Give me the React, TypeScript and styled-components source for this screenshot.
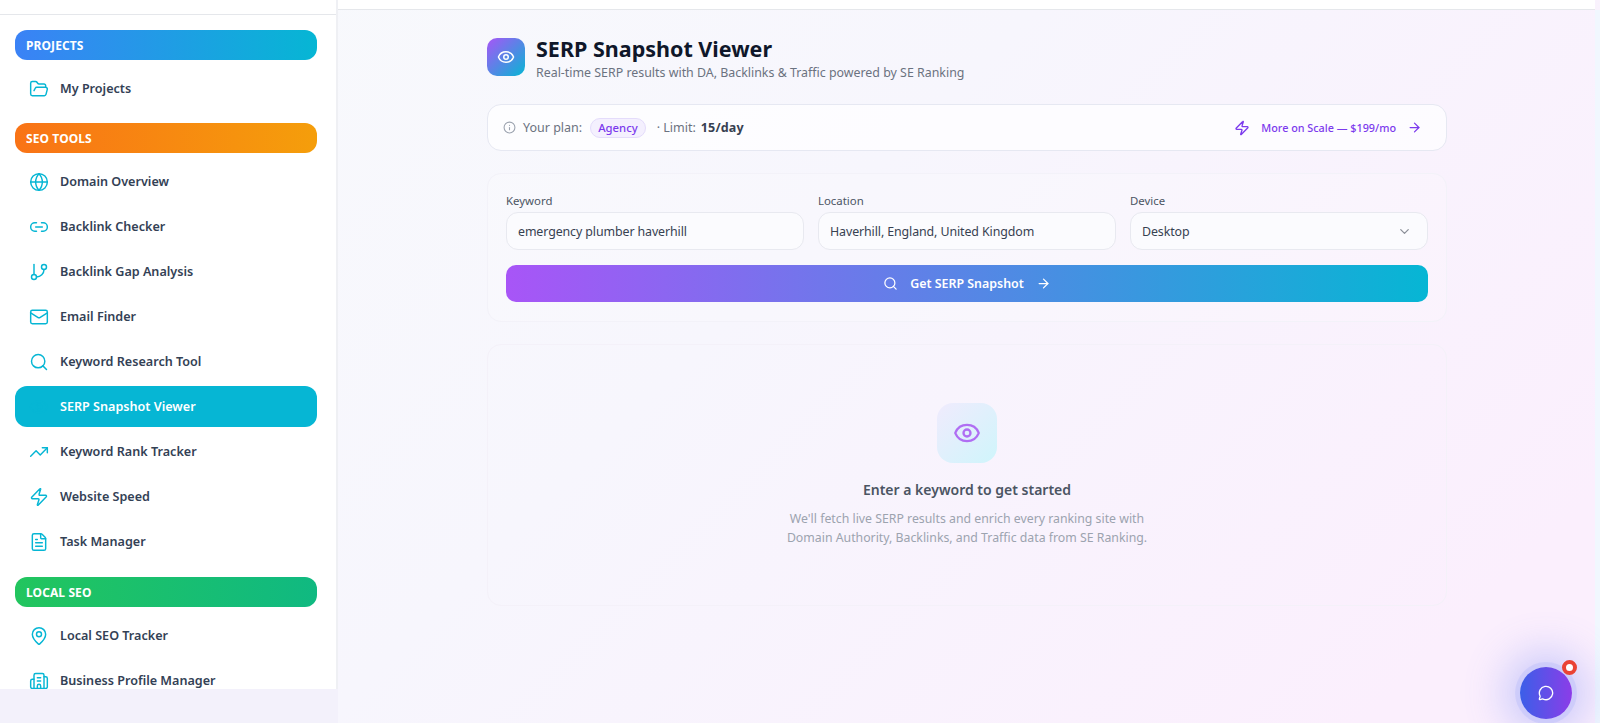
import React from "react";
import styled, { createGlobalStyle } from "styled-components";
import {
  ArrowRight,
  Building2,
  ChevronDown,
  Eye,
  FileText,
  FolderOpen,
  GitBranch,
  Globe,
  Info,
  Link2,
  Mail,
  MapPin,
  MessageCircle,
  Search,
  TrendingUp,
  Zap,
} from "lucide-react";

const GlobalStyle = createGlobalStyle`
  html, body, #root {
    margin: 0;
    height: 100%;
  }
  body {
    overflow: hidden;
    font-family: "Noto Sans", "Open Sans", sans-serif;
    background: linear-gradient(135deg, #f8fafc 0%, #f7f6fd 45%, #fbeffd 90%);
  }
  * {
    box-sizing: border-box;
  }
`;

const Page = styled.div`
  display: flex;
  height: 723px;
  overflow: hidden;
`;

const SidebarColumn = styled.div`
  width: 338px;
  flex-shrink: 0;
  display: flex;
  flex-direction: column;
  background: #f3f1fb;
`;

const Sidebar = styled.nav`
  height: 689px;
  overflow: hidden;
  background: #ffffff;
  border-right: 2px solid #eff0f4;
`;

const SidebarTop = styled.div`
  height: 15px;
  border-bottom: 1px solid #e5e7eb;
`;

const SidebarBody = styled.div`
  padding: 15px 19px 0 15px;
  display: flex;
  flex-direction: column;
`;

const GroupHeader = styled.div<{ $from: string; $to: string; $gap: number }>`
  height: 30px;
  margin-top: ${({ $gap }) => $gap}px;
  margin-bottom: 8px;
  padding-left: 11px;
  display: flex;
  align-items: center;
  border-radius: 12px;
  background: linear-gradient(90deg, ${({ $from }) => $from}, ${({ $to }) => $to});
  color: #ffffff;
  font-size: 12px;
  font-weight: 700;
  letter-spacing: 0.1px;
`;

const NavList = styled.div`
  display: flex;
  flex-direction: column;
  gap: 4px;
`;

const NavItem = styled.a<{ $active?: boolean }>`
  height: 41px;
  flex-shrink: 0;
  padding-left: 14px;
  display: flex;
  align-items: center;
  gap: 11px;
  border-radius: 12px;
  background: ${({ $active }) => ($active ? "#06b6d4" : "transparent")};
  color: ${({ $active }) => ($active ? "#ffffff" : "#334155")};
  font-size: 12.6px;
  font-weight: 600;

  svg {
    width: 20px;
    height: 20px;
    flex-shrink: 0;
    color: #06b6d4;
    stroke-width: 1.75;
  }
`;

const Main = styled.main`
  flex: 1;
  min-width: 0;
  display: flex;
  flex-direction: column;
`;

const TopBar = styled.div`
  height: 10px;
  flex-shrink: 0;
  background: #ffffff;
  border-bottom: 1px solid #e5e7eb;
`;

const ScrollTrack = styled.div`
  width: 5px;
  flex-shrink: 0;
  margin-top: 10px;
  background: #f1f7fe;
`;

const Content = styled.div`
  width: 960px;
  margin-left: 149px;
  padding-top: 26px;
  display: flex;
  flex-direction: column;
`;

const TitleRow = styled.header`
  display: flex;
  align-items: flex-start;
  gap: 11px;
  height: 45px;
`;

const TitleIcon = styled.div`
  width: 38px;
  height: 38px;
  margin-top: 2px;
  border-radius: 10px;
  display: flex;
  align-items: center;
  justify-content: center;
  color: #ffffff;
  background: linear-gradient(135deg, #a855f7, #06b6d4);

  svg {
    width: 18px;
    height: 18px;
  }
`;

const TitleText = styled.div`
  display: flex;
  flex-direction: column;
  gap: 2px;
`;

const Title = styled.h1`
  margin: 0;
  font-size: 21.5px;
  line-height: 26px;
  font-weight: 700;
  color: #0f172a;
`;

const Subtitle = styled.p`
  margin: 0;
  font-size: 12.4px;
  line-height: 17px;
  color: #6b7280;
`;

const PlanBar = styled.div`
  margin-top: 23px;
  height: 47px;
  padding: 0 24px 0 15px;
  display: flex;
  align-items: center;
  justify-content: space-between;
  background: rgba(255, 255, 255, 0.7);
  border: 1px solid #e6e8f2;
  border-radius: 14px;
`;

const PlanInfo = styled.div`
  display: flex;
  align-items: center;
  gap: 6px;
  font-size: 12.5px;
  color: #6b7280;

  svg {
    width: 13px;
    height: 13px;
    color: #9ca3af;
    margin-right: 1px;
  }

  b {
    margin-left: -1px;
    letter-spacing: 0.15px;
    color: #374151;
    font-weight: 700;
  }
`;

const PlanBadge = styled.span`
  height: 20px;
  padding: 0 7px;
  margin: 0 5px 0 2px;
  display: inline-flex;
  align-items: center;
  border-radius: 10px;
  background: #f4f0fe;
  border: 1px solid #e4dcfb;
  color: #7c3aed;
  font-size: 11.3px;
  font-weight: 500;
`;

const UpgradeLink = styled.a`
  display: flex;
  align-items: center;
  gap: 11px;
  color: #7c3aed;
  font-size: 10.8px;
  font-weight: 500;

  svg {
    width: 15px;
    height: 15px;
  }
  svg:first-child {
    width: 16px;
    height: 16px;
  }
`;

const SearchCard = styled.section`
  margin-top: 22px;
  padding: 19px 18px 19px 18px;
  background: rgba(255, 255, 255, 0.2);
  border: 1px solid #f3f2f9;
  border-radius: 14px;
`;

const FieldGrid = styled.div`
  display: grid;
  grid-template-columns: repeat(3, 1fr);
  gap: 14px;
`;

const Field = styled.label`
  display: flex;
  flex-direction: column;
  gap: 3px;
  font-size: 11.4px;
  line-height: 16px;
  color: #4b5563;
`;

const InputBox = styled.div`
  height: 38px;
  padding: 1px 15px 0 11px;
  display: flex;
  align-items: center;
  justify-content: space-between;
  border: 1px solid #e8e9f0;
  border-radius: 12px;
  background: #fbfbfe;
  color: #374151;
  font-size: 12.4px;
  letter-spacing: -0.1px;

  svg {
    width: 15px;
    height: 15px;
    color: #8b8f98;
  }
`;

const SubmitButton = styled.button`
  width: 100%;
  height: 37px;
  margin-top: 15px;
  border: none;
  border-radius: 10px;
  display: flex;
  align-items: center;
  justify-content: center;
  gap: 12px;
  background: linear-gradient(90deg, #a855f7, #06b6d4);
  color: #ffffff;
  font-family: inherit;
  font-size: 12.4px;
  font-weight: 600;

  svg {
    width: 15px;
    height: 15px;
  }
`;

const EmptyCard = styled.section`
  margin-top: 22px;
  height: 262px;
  padding-top: 58px;
  display: flex;
  flex-direction: column;
  align-items: center;
  border: 1px solid #f4f1f9;
  border-radius: 14px;
`;

const EmptyIcon = styled.div`
  width: 60px;
  height: 60px;
  border-radius: 16px;
  display: flex;
  align-items: center;
  justify-content: center;
  color: #b06ef3;
  background: linear-gradient(135deg, #f0ebfd, #cff5fb);

  svg {
    width: 28px;
    height: 28px;
  }
`;

const EmptyTitle = styled.h2`
  margin: 17px 0 0;
  font-size: 14px;
  line-height: 20px;
  font-weight: 600;
  color: #4b5563;
`;

const EmptyText = styled.p`
  margin: 9px 0 0;
  font-size: 12.3px;
  line-height: 19px;
  color: #9ca3af;
  text-align: center;
`;

const ChatButton = styled.button`
  position: fixed;
  left: 1520px;
  top: 667px;
  width: 52px;
  height: 52px;
  padding: 0;
  border: none;
  border-radius: 50%;
  display: flex;
  align-items: center;
  justify-content: center;
  color: #ffffff;
  background: linear-gradient(90deg, #3b5fe8, #8b3de8);
  box-shadow: 0 0 0 5px rgba(96, 120, 246, 0.12), 0 0 40px 16px rgba(96, 120, 246, 0.3);

  svg {
    width: 16px;
    height: 16px;
  }
`;

const ChatDot = styled.span`
  position: absolute;
  top: -7px;
  right: -5px;
  width: 15px;
  height: 15px;
  border-radius: 50%;
  background: #ffffff;
  border: 4px solid #ea4335;
`;

const projectItems = [{ label: "My Projects", icon: FolderOpen }];

const seoItems = [
  { label: "Domain Overview", icon: Globe },
  { label: "Backlink Checker", icon: Link2 },
  { label: "Backlink Gap Analysis", icon: GitBranch },
  { label: "Email Finder", icon: Mail },
  { label: "Keyword Research Tool", icon: Search },
  { label: "SERP Snapshot Viewer", icon: Eye, active: true },
  { label: "Keyword Rank Tracker", icon: TrendingUp },
  { label: "Website Speed", icon: Zap },
  { label: "Task Manager", icon: FileText },
];

const localItems = [
  { label: "Local SEO Tracker", icon: MapPin },
  { label: "Business Profile Manager", icon: Building2 },
];

type Item = { label: string; icon: typeof Eye; active?: boolean };

const NavGroup = ({ items }: { items: Item[] }) => (
  <NavList>
    {items.map(({ label, icon: Icon, active }) => (
      <NavItem key={label} $active={active}>
        <Icon />
        {label}
      </NavItem>
    ))}
  </NavList>
);

const App = () => {
  return (
    <>
      <GlobalStyle />
      <Page>
        <SidebarColumn>
          <Sidebar>
            <SidebarTop />
            <SidebarBody>
              <GroupHeader $gap={0} $from="#3b82f6" $to="#06b6d4">PROJECTS</GroupHeader>
              <NavGroup items={projectItems} />
              <GroupHeader $gap={14} $from="#f97316" $to="#f59e0b">SEO TOOLS</GroupHeader>
              <NavGroup items={seoItems} />
              <GroupHeader $gap={15} $from="#22c55e" $to="#10b981">LOCAL SEO</GroupHeader>
              <NavGroup items={localItems} />
            </SidebarBody>
          </Sidebar>
        </SidebarColumn>
        <Main>
          <TopBar />
          <Content>
            <TitleRow>
              <TitleIcon><Eye /></TitleIcon>
              <TitleText>
                <Title>SERP Snapshot Viewer</Title>
                <Subtitle>Real-time SERP results with DA, Backlinks &amp; Traffic powered by SE Ranking</Subtitle>
              </TitleText>
            </TitleRow>
            <PlanBar>
              <PlanInfo>
                <Info />
                Your plan:
                <PlanBadge>Agency</PlanBadge>
                · Limit: <b>15/day</b>
              </PlanInfo>
              <UpgradeLink>
                <Zap />
                More on Scale — $199/mo
                <ArrowRight />
              </UpgradeLink>
            </PlanBar>
            <SearchCard>
              <FieldGrid>
                <Field>
                  Keyword
                  <InputBox>emergency plumber haverhill</InputBox>
                </Field>
                <Field>
                  Location
                  <InputBox>Haverhill, England, United Kingdom</InputBox>
                </Field>
                <Field>
                  Device
                  <InputBox>
                    Desktop
                    <ChevronDown />
                  </InputBox>
                </Field>
              </FieldGrid>
              <SubmitButton>
                <Search />
                Get SERP Snapshot
                <ArrowRight />
              </SubmitButton>
            </SearchCard>
            <EmptyCard>
              <EmptyIcon><Eye /></EmptyIcon>
              <EmptyTitle>Enter a keyword to get started</EmptyTitle>
              <EmptyText>
                We'll fetch live SERP results and enrich every ranking site with
                <br />
                Domain Authority, Backlinks, and Traffic data from SE Ranking.
              </EmptyText>
            </EmptyCard>
          </Content>
        </Main>
        <ScrollTrack />
      </Page>
      <ChatButton>
        <MessageCircle />
        <ChatDot />
      </ChatButton>
    </>
  );
};

export default App;
